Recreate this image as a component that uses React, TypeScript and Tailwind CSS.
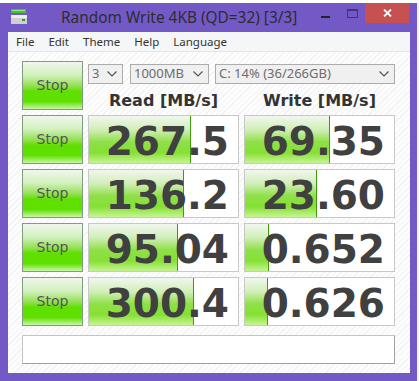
import React from 'react';

const rows = [
  { read: '267.5', readPct: 102, write: '69.35', writePct: 85 },
  { read: '136.2', readPct: 95, write: '23.60', writePct: 72 },
  { read: '95.04', readPct: 89, write: '0.652', writePct: 24 },
  { read: '300.4', readPct: 105, write: '0.626', writePct: 23 },
];

function StopButton() {
  return (
    <div className="w-[61px] h-[49px] border border-[#7f9d7f] bg-[linear-gradient(to_bottom,#f0f8ec_0%,#d2f0bd_28%,#8fe04c_52%,#5fe000_62%,#5fe000_84%,#c9f6a6_100%)] flex items-center justify-center text-[14px] text-[#555555] [font-family:'DejaVu_Sans',sans-serif]">
      Stop
    </div>
  );
}

function BarCell({ value, width }: { value: string; width: number }) {
  return (
    <div className="relative w-[151px] h-[49px] border border-[#c8c8c8] bg-white overflow-hidden">
      <div
        className="absolute left-0 top-0 bottom-0 border-r border-[#3f9a0c] bg-[linear-gradient(to_bottom,#f2f7ef_0%,#cfeeb6_30%,#8fe048_55%,#86e034_78%,#c6f494_100%)]"
        style={{ width }}
      />
      <div className="relative h-full flex items-center justify-end pr-[9px] pt-[3px] text-[39px] font-bold text-[#404040] leading-none [font-family:'DejaVu_Sans',sans-serif]">
        {value}
      </div>
    </div>
  );
}

function Combo({ label, w }: { label: string; w: string }) {
  return (
    <div className={`${w} h-[20px] border border-[#acacac] bg-[#f0f0f0] flex items-center justify-between pl-[3px] pr-[5px] text-[13px] text-[#6d6d6d] [font-family:'Noto_Sans',sans-serif]`}>
      <span>{label}</span>
      <svg width="10" height="6" viewBox="0 0 10 6">
        <path d="M0.5 0.5 L5 5 L9.5 0.5" fill="none" stroke="#555" strokeWidth="1.2" />
      </svg>
    </div>
  );
}

export default function App() {
  return (
    <div className="w-[419px] h-[381px] bg-[#f4f4f4] overflow-hidden">
      <div className="h-[3px] bg-white" />
      <div className="w-[417px] h-[378px] bg-[#7259c6] flex flex-col">
        {/* title bar */}
        <div className="h-[29px] flex items-start relative">
          <svg className="absolute left-[11px] top-[6px]" width="17" height="16" viewBox="0 0 17 16">
            <rect x="0" y="0" width="15" height="4" fill="#41c62a" />
            <rect x="1" y="1" width="13" height="1" fill="#8ef07a" />
            <rect x="0" y="6" width="16" height="9" fill="#cfcfcf" />
            <rect x="0" y="6" width="16" height="3" fill="#eeeeee" />
            <rect x="11" y="10" width="3" height="2" fill="#2e9a2e" />
          </svg>
          <div className="absolute left-[61px] top-[6px] text-[15.4px] leading-[18px] text-[#2d2d2d] [font-family:'Noto_Sans',sans-serif]">
            Random Write 4KB (QD=32) [3/3]
          </div>
          <div className="absolute left-[321px] top-[13px] w-[9px] h-[2px] bg-[#222]" />
          <div className="absolute left-[347px] top-[6px] w-[11px] h-[9px] border border-[#40357a] border-t-2" />
          <div className="absolute left-[365px] top-0 w-[44px] h-[20px] bg-[#c75050] flex items-center justify-center">
            <svg width="9" height="8" viewBox="0 0 9 8">
              <path d="M1 0.5 L8 7.5 M8 0.5 L1 7.5" stroke="white" strokeWidth="1.8" />
            </svg>
          </div>
        </div>
        {/* client */}
        <div className="ml-[8px] w-[402px] h-[341px] flex flex-col">
          <div className="h-[20px] bg-[#f5f6f7] border-b border-[#e3e5e8] flex items-center gap-[14px] pl-[8px] text-[11.5px] text-[#333] [font-family:'Noto_Sans',sans-serif]">
            <span>File</span>
            <span>Edit</span>
            <span>Theme</span>
            <span>Help</span>
            <span>Language</span>
          </div>
          <div className="flex-1 pl-[14px] pt-[9px] bg-[repeating-linear-gradient(135deg,#fdfdfd_0px,#fdfdfd_3px,#f2f2f2_3px,#f2f2f2_4px)]">
            <div className="flex gap-[5px]">
              <StopButton />
              <div className="flex flex-col">
                <div className="flex mt-[3px]">
                  <Combo label="3" w="w-[35px]" />
                  <div className="w-[7px]" />
                  <Combo label="1000MB" w="w-[79px]" />
                  <div className="w-[6px]" />
                  <Combo label="C: 14% (36/266GB)" w="w-[180px]" />
                </div>
                <div className="flex gap-[5px] mt-[8px] text-[16px] font-bold text-[#333] leading-[18px] [font-family:'DejaVu_Sans',sans-serif]">
                  <div className="w-[151px] text-center">Read [MB/s]</div>
                  <div className="w-[151px] text-center">Write [MB/s]</div>
                </div>
              </div>
            </div>
            {rows.map((r, i) => (
              <div key={i} className="flex gap-[5px] mt-[5px]">
                <StopButton />
                <BarCell value={r.read} width={r.readPct} />
                <BarCell value={r.write} width={r.writePct} />
              </div>
            ))}
            <div className="mt-[9px] w-[373px] h-[29px] border border-[#c4c4c4] border-r-[#a0a0a0] border-b-[#a0a0a0] bg-white" />
          </div>
        </div>
      </div>
    </div>
  );
}
